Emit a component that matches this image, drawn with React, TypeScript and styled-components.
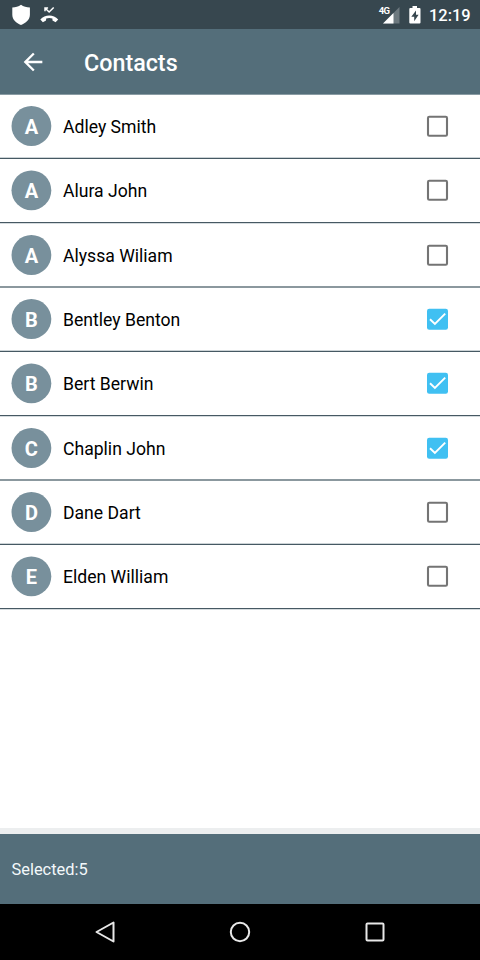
import React from 'react';
import styled, { createGlobalStyle } from 'styled-components';

const GlobalStyle = createGlobalStyle`
  * { box-sizing: border-box; }
  body { margin: 0; background: #fff; font-family: Roboto, "Liberation Sans", sans-serif; }
`;

const Screen = styled.div`
  display: flex;
  flex-direction: column;
  width: 480px;
  height: 960px;
  overflow: hidden;
  background: #fff;
`;

const StatusBar = styled.div`
  display: flex;
  align-items: flex-start;
  height: 29px;
  padding: 4px 10px 0 10px;
  background: #37474f;
  color: #fff;
`;

const StatusIcon = styled.svg<{ $gap?: number; $top?: number }>`
  display: block;
  flex: none;
  margin-left: ${(p) => p.$gap ?? 0}px;
  margin-top: ${(p) => p.$top ?? 0}px;
`;

const Spacer = styled.div`
  flex: 1;
`;

const NetworkLabel = styled.span`
  font-size: 9.5px;
  font-weight: 700;
  line-height: 10px;
  margin: 2px -6px 0 0;
  letter-spacing: -0.9px;
`;

const Clock = styled.span`
  width: 41px;
  margin-left: 8px;
  font-size: 16.4px;
  font-weight: 500;
  line-height: 24px;
  white-space: nowrap;
`;

const Toolbar = styled.header`
  display: flex;
  align-items: center;
  height: 66px;
  padding-left: 18.5px;
  background: #546e7a;
  border-bottom: 1px solid #8a9ca4;
  color: #fff;
`;

const Title = styled.h1`
  margin: 3px 0 0 37.5px;
  font-size: 23.3px;
  font-weight: 500;
  line-height: 28px;
`;

const List = styled.ul`
  flex: 1;
  margin: 0;
  padding: 0;
  list-style: none;
`;

type Edge = 'lower' | 'upper' | 'even';

const edgeColors: Record<Edge, [string, string]> = {
  lower: ['#ccd3d6', '#465963'],
  upper: ['#465963', '#d5dbde'],
  even: ['#8b989e', '#8b989e'],
};

const Row = styled.li<{ $edge: Edge }>`
  display: flex;
  align-items: center;
  height: ${(p) => (p.$edge === 'upper' ? 65 : 64)}px;
  padding: 0 31px 0 11px;
  border-bottom: 1px solid ${(p) => edgeColors[p.$edge][1]};
  box-shadow: inset 0 -1px 0 ${(p) => edgeColors[p.$edge][0]};
`;

const Avatar = styled.svg<{ $raised: boolean }>`
  display: block;
  flex: none;
  width: 41px;
  height: 41px;
  margin-top: ${(p) => (p.$raised ? -2 : 0)}px;
`;

const Initial = styled.text`
  fill: #fff;
  font-size: 20px;
  font-weight: 700;
  text-anchor: middle;
`;

const Name = styled.span`
  flex: 1;
  margin-left: 11px;
  font-size: 17.6px;
  line-height: 22px;
  color: #000;
`;

const Check = styled.svg`
  display: block;
  flex: none;
  margin-top: -1px;
`;

const Footer = styled.footer`
  display: flex;
  align-items: center;
  height: 76px;
  padding: 0 0 0 11.5px;
  background: #546e7a;
  border-top: 6px solid #eceeef;
  color: #f3f8fa;
  font-size: 16.4px;
`;

const NavBar = styled.nav`
  display: flex;
  justify-content: space-between;
  align-items: center;
  height: 56px;
  padding: 0 93px;
  background: #000;
`;

const contacts: { name: string; checked?: boolean }[] = [
  { name: 'Adley Smith' },
  { name: 'Alura John' },
  { name: 'Alyssa Wiliam' },
  { name: 'Bentley Benton', checked: true },
  { name: 'Bert Berwin', checked: true },
  { name: 'Chaplin John', checked: true },
  { name: 'Dane Dart' },
  { name: 'Elden William' },
];

const edges: Edge[] = ['lower', 'upper', 'even'];

function Checkbox({ checked }: { checked?: boolean }) {
  return (
    <Check width="23" height="23" viewBox="0 0 23 23" fill="none">
      {checked ? (
        <>
          <rect x="1" y="0.7" width="21" height="21" rx="2.2" fill="#40c0f2" />
          <path d="M4 11.2 8.9 16 19.2 5.7" stroke="#fff" strokeWidth="1.9" />
        </>
      ) : (
        <rect x="2" y="1.7" width="19" height="19" rx="1.3" stroke="#747474" strokeWidth="2.1" />
      )}
    </Check>
  );
}

export default function App() {
  return (
    <>
      <GlobalStyle />
      <Screen>
        <StatusBar>
          <StatusIcon $gap={2} width="19" height="22" viewBox="0 0 19 22">
            <path d="M9 .7C6.500 2.400 3.500 3.500.3 3.500v7.300c0 5 4 8.500 8.700 10.200C13.700 19.300 17.900 15.800 17.900 10.800V3.500C14.500 3.500 11.500 2.400 9 .7z" fill="#fff" />
          </StatusIcon>
          <StatusIcon $gap={9} $top={2} width="19" height="18" viewBox="0 0 19 18" fill="none">
            <path d="M5 5.300V2.100H8.100M5.200 2.300l3.900 3.700L13.700 1.500" stroke="#fff" strokeWidth="1.5" />
            <path d="M.3 13.400C5 8.200 13.500 8.200 18.200 13.400L15.600 16.300 12.500 14.500 12.400 12.500Q9.300 11.500 6.200 12.500L6 14.500 2.900 16.300Z" fill="#fff" />
          </StatusIcon>
          <Spacer />
          <NetworkLabel>4G</NetworkLabel>
          <StatusIcon $top={3} width="17" height="17" viewBox="0 0 17 17">
            <path d="M16.500 0V16.500H0z" fill="#6d797f" />
            <path d="M10.500 6V16.500H0z" fill="#fff" />
          </StatusIcon>
          <StatusIcon $gap={9} $top={2} width="12" height="18" viewBox="0 0 12 18">
            <path d="M3.500 0h4.500v2h2.500q1 0 1 1v13.500q0 1-1 1H1.300q-1 0-1-1V3q0-1 1-1h2.200z" fill="#fff" />
            <path d="M7 4.500 2.300 10.700H5.200V15.300L9.600 8.800H7z" fill="#37474f" />
          </StatusIcon>
          <Clock>12:19</Clock>
        </StatusBar>
        <Toolbar>
          <svg width="28" height="28" viewBox="0 0 24 24" fill="#fff">
            <path d="M20 11H7.830l5.590-5.590L12 4l-8 8 8 8 1.410-1.410L7.830 13H20v-2z" />
          </svg>
          <Title>Contacts</Title>
        </Toolbar>
        <List>
          {contacts.map((contact, i) => (
            <Row key={contact.name} $edge={edges[i % 3]}>
              <Avatar viewBox="0 0 41 41" $raised={i % 3 === 1}>
                <circle cx="20.4" cy={i % 3 === 1 ? 20.3 : 20} r="19.9" fill="#78909c" />
                <Initial x="20.4" y={i % 3 === 1 ? 28 : 27.800}>{contact.name[0]}</Initial>
              </Avatar>
              <Name>{contact.name}</Name>
              <Checkbox checked={contact.checked} />
            </Row>
          ))}
        </List>
        <Footer>Selected:5</Footer>
        <NavBar>
          <svg width="24" height="24" viewBox="0 0 24 24" fill="none">
            <path d="M20.500 2.500V21.500L3.500 12Z" stroke="#e8e8e8" strokeWidth="2" strokeLinejoin="round" />
          </svg>
          <svg width="24" height="24" viewBox="0 0 24 24" fill="none">
            <circle cx="12" cy="12" r="9.2" stroke="#e8e8e8" strokeWidth="2" />
          </svg>
          <svg width="24" height="24" viewBox="0 0 24 24" fill="none">
            <rect x="3.5" y="3.5" width="17" height="17" rx="1" stroke="#e8e8e8" strokeWidth="2" />
          </svg>
        </NavBar>
      </Screen>
    </>
  );
}
